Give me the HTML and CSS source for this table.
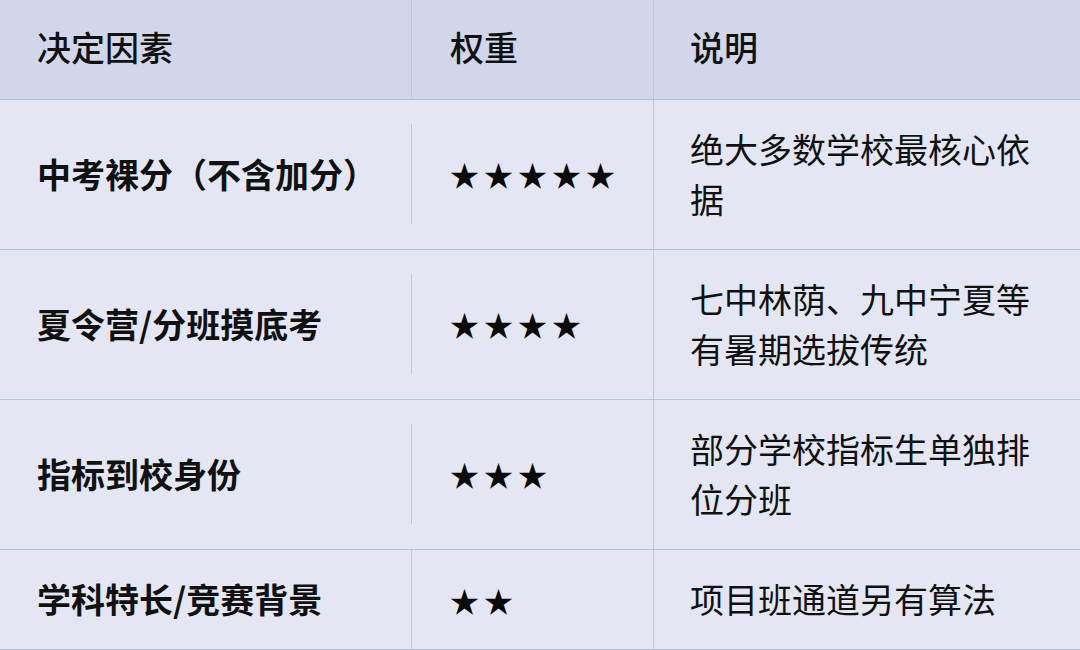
FILE: index.html
```html
<!DOCTYPE html>
<html lang="zh-CN">
<head>
<meta charset="utf-8">
<link rel="stylesheet" href="styles.css">
</head>
<body>
<div class="table">
  <div class="row head">
    <div class="cell c1">决定因素</div>
    <div class="cell c2"><div class="inner">权重</div></div>
    <div class="cell c3">说明</div>
  </div>
  <div class="row">
    <div class="cell c1 strong">中考裸分（不含加分）</div>
    <div class="cell c2"><div class="inner stars">★★★★★</div></div>
    <div class="cell c3">绝大多数学校最核心依据</div>
  </div>
  <div class="row">
    <div class="cell c1 strong">夏令营/分班摸底考</div>
    <div class="cell c2"><div class="inner stars">★★★★</div></div>
    <div class="cell c3">七中林荫、九中宁夏等有暑期选拔传统</div>
  </div>
  <div class="row">
    <div class="cell c1 strong">指标到校身份</div>
    <div class="cell c2"><div class="inner stars">★★★</div></div>
    <div class="cell c3">部分学校指标生单独排位分班</div>
  </div>
  <div class="row last">
    <div class="cell c1 strong">学科特长/竞赛背景</div>
    <div class="cell c2"><div class="inner stars">★★</div></div>
    <div class="cell c3">项目班通道另有算法</div>
  </div>
</div>
</body>
</html>
```
FILE: styles.css
```css
html, body {
  margin: 0;
  padding: 0;
  background: #e4e7f3;
}
body {
  width: 1080px;
  height: 650px;
  overflow: hidden;
  font-family: "Noto Sans CJK SC", "Noto Sans", sans-serif;
  font-size: 34px;
  color: #111;
}
.table {
  display: flex;
  flex-direction: column;
}
.row {
  display: grid;
  grid-template-columns: 411px 242px 1fr;
  border-bottom: 1px solid #bcc0d8;
}
.row.head {
  background: #d2d6ea;
  border-bottom: 1px solid #b6bbe0;
  font-weight: 500;
}
.cell {
  line-height: 50px;
  display: flex;
  align-items: center;
}
.c1 {
  padding: 24px 20px 25px 37px;
}
.c2 {
  padding: 24px 0 25px 0;
  align-items: stretch;
}
.c2 .inner {
  flex: 1;
  display: flex;
  align-items: center;
  padding-left: 38px;
  border-left: 1px solid #c2c6da;
}
.c3 {
  padding: 24px 36px 25px 36px;
  border-left: 1px solid #c2c6da;
}
.head .c1, .head .c3 {
  padding-top: 22px;
  padding-bottom: 27px;
}
.head .c2 {
  padding-top: 0;
  padding-bottom: 0;
}
.head .c2 .inner {
  padding-bottom: 5px;
}
.strong {
  font-weight: 700;
}
.stars {
  color: #0a0a0a;
  font-size: 29px;
  letter-spacing: 5px;
}
.last .c2 {
  padding-top: 0;
  padding-bottom: 0;
}
```
